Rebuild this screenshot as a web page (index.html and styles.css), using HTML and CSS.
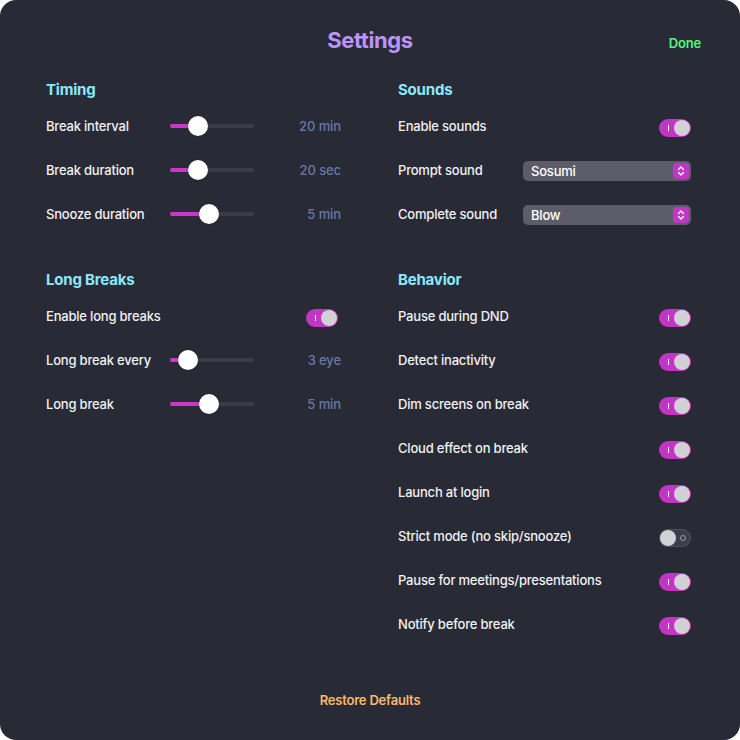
FILE: index.html
```html
<!DOCTYPE html>
<html>
<head>
<meta charset="utf-8">
<link rel="stylesheet" href="styles.css">
</head>
<body>
<div class="window">
  <header class="header">
    <span></span>
    <h1 class="title">Settings</h1>
    <span class="done">Done</span>
  </header>
  <main class="grid">
    <section class="section">
      <h2 class="heading">Timing</h2>
      <div class="row">
        <span class="label">Break interval</span>
        <div class="slider"><div class="fill" style="width:28px"></div><div class="thumb" style="left:18px"></div></div>
        <span class="value">20 min</span>
      </div>
      <div class="row">
        <span class="label">Break duration</span>
        <div class="slider"><div class="fill" style="width:28px"></div><div class="thumb" style="left:18px"></div></div>
        <span class="value">20 sec</span>
      </div>
      <div class="row">
        <span class="label">Snooze duration</span>
        <div class="slider"><div class="fill" style="width:39px"></div><div class="thumb" style="left:29px"></div></div>
        <span class="value">5 min</span>
      </div>
    </section>
    <section class="section">
      <h2 class="heading">Sounds</h2>
      <div class="row">
        <span class="label">Enable sounds</span>
        <div class="toggle on"><span class="mark"></span><span class="knob"></span></div>
      </div>
      <div class="row">
        <span class="label">Prompt sound</span>
        <div class="select"><span>Sosumi</span><span class="arrows"><svg width="8" height="12" viewBox="0 0 8 12"><path d="M1.5 4.5 L4 2 L6.5 4.5 M1.5 7.5 L4 10 L6.5 7.5" fill="none" stroke="#fff" stroke-width="1.3" stroke-linecap="round" stroke-linejoin="round"/></svg></span></div>
      </div>
      <div class="row">
        <span class="label">Complete sound</span>
        <div class="select"><span>Blow</span><span class="arrows"><svg width="8" height="12" viewBox="0 0 8 12"><path d="M1.5 4.5 L4 2 L6.5 4.5 M1.5 7.5 L4 10 L6.5 7.5" fill="none" stroke="#fff" stroke-width="1.3" stroke-linecap="round" stroke-linejoin="round"/></svg></span></div>
      </div>
    </section>
    <section class="section">
      <h2 class="heading">Long Breaks</h2>
      <div class="row">
        <span class="label">Enable long breaks</span>
        <div class="toggle on inset"><span class="mark"></span><span class="knob"></span></div>
      </div>
      <div class="row">
        <span class="label">Long break every</span>
        <div class="slider"><div class="fill" style="width:18px"></div><div class="thumb" style="left:8px"></div></div>
        <span class="value">3 eye</span>
      </div>
      <div class="row">
        <span class="label">Long break</span>
        <div class="slider"><div class="fill" style="width:39px"></div><div class="thumb" style="left:29px"></div></div>
        <span class="value">5 min</span>
      </div>
    </section>
    <section class="section">
      <h2 class="heading">Behavior</h2>
      <div class="row"><span class="label">Pause during DND</span><div class="toggle on"><span class="mark"></span><span class="knob"></span></div></div>
      <div class="row"><span class="label">Detect inactivity</span><div class="toggle on"><span class="mark"></span><span class="knob"></span></div></div>
      <div class="row"><span class="label">Dim screens on break</span><div class="toggle on"><span class="mark"></span><span class="knob"></span></div></div>
      <div class="row"><span class="label">Cloud effect on break</span><div class="toggle on"><span class="mark"></span><span class="knob"></span></div></div>
      <div class="row"><span class="label">Launch at login</span><div class="toggle on"><span class="mark"></span><span class="knob"></span></div></div>
      <div class="row"><span class="label">Strict mode (no skip/snooze)</span><div class="toggle off"><span class="knob"></span><span class="ring"></span></div></div>
      <div class="row"><span class="label">Pause for meetings/presentations</span><div class="toggle on"><span class="mark"></span><span class="knob"></span></div></div>
      <div class="row"><span class="label">Notify before break</span><div class="toggle on"><span class="mark"></span><span class="knob"></span></div></div>
    </section>
  </main>
  <footer class="footer"><span class="restore">Restore Defaults</span></footer>
</div>
</body>
</html>
```
FILE: styles.css
```css
* { box-sizing: border-box; }
html, body { margin: 0; padding: 0; background: #ffffff; }
body { font-family: Inter, "Noto Sans", sans-serif; }
.window {
  width: 740px;
  height: 740px;
  background: #282a36;
  border-radius: 16px;
  padding: 26px 49px 0 46px;
  display: flex;
  flex-direction: column;
  color: #f1f1f3;
}
.header {
  display: grid;
  grid-template-columns: 1fr auto 1fr;
  align-items: center;
  height: 28px;
}
.title {
  margin: 0;
  font-size: 22px;
  font-weight: 700;
  color: #bd93f9;
  line-height: 28px;
  letter-spacing: -0.4px;
  padding-left: 3px;
}
.done {
  justify-self: end;
  font-size: 13px;
  font-weight: 600;
  color: #50fa7b;
  margin-top: 5px;
  margin-right: -10px;
  letter-spacing: -0.2px;
}
.grid {
  margin-top: 26px;
  display: grid;
  grid-template-columns: 295px 1fr;
  column-gap: 57px;
  row-gap: 34px;
  align-items: start;
}
.heading {
  margin: 0 0 4px 0;
  font-size: 15px;
  font-weight: 700;
  color: #8be9fd;
  line-height: 20px;
  letter-spacing: -0.2px;
}
.row {
  height: 44px;
  display: flex;
  align-items: center;
}
.label {
  font-size: 13px;
  font-weight: 500;
  width: 124px;
  flex-shrink: 0;
  white-space: nowrap;
  letter-spacing: -0.2px;
}
.section:nth-child(even) .label { width: 125px; }
.slider {
  position: relative;
  width: 84px;
  height: 4px;
  border-radius: 2px;
  background: #3a3c49;
}
.fill {
  height: 4px;
  border-radius: 2px;
  background: #c936c9;
}
.thumb {
  position: absolute;
  top: -8px;
  width: 20px;
  height: 20px;
  border-radius: 50%;
  background: #ffffff;
  box-shadow: 0 0 2px rgba(0,0,0,0.4);
}
.value {
  margin-left: auto;
  font-size: 13px;
  font-weight: 500;
  color: #6878a8;
  letter-spacing: -0.1px;
}
.toggle {
  margin-left: auto;
  margin-top: 4px;
  width: 32px;
  height: 18px;
  border-radius: 9px;
  display: flex;
  align-items: center;
  padding: 0 1px;
}
.toggle.inset { margin-right: 3px; }
.toggle.on { background: #c236c6; justify-content: flex-end; }
.toggle.off { background: #3b3d4a; box-shadow: inset 0 0 0 1px #4d4f5c; justify-content: flex-start; }
.knob {
  width: 16px;
  height: 16px;
  border-radius: 50%;
  background: #d2d2d6;
}
.mark {
  width: 1px;
  height: 6px;
  background: #ffffff;
  margin-right: 5px;
}
.ring {
  width: 6px;
  height: 6px;
  border-radius: 50%;
  border: 1px solid #9a9ca8;
  margin-left: 4px;
}
.select {
  margin-left: auto;
  margin-top: 1px;
  width: 168px;
  height: 20px;
  border-radius: 5px;
  background: #5c5d68;
  display: flex;
  align-items: center;
  justify-content: space-between;
  padding: 0 2px 0 8px;
  font-size: 13px;
  font-weight: 500;
  color: #ffffff;
  letter-spacing: -0.2px;
}
.arrows {
  width: 16px;
  height: 16px;
  border-radius: 4px;
  background: #c236c6;
  display: flex;
  align-items: center;
  justify-content: center;
}
.footer {
  margin-top: auto;
  height: 60px;
  display: flex;
  justify-content: center;
  padding-top: 12px;
  margin-right: -3px;
}
.restore {
  font-size: 13px;
  font-weight: 600;
  color: #ffb86c;
  letter-spacing: -0.2px;
}
```
